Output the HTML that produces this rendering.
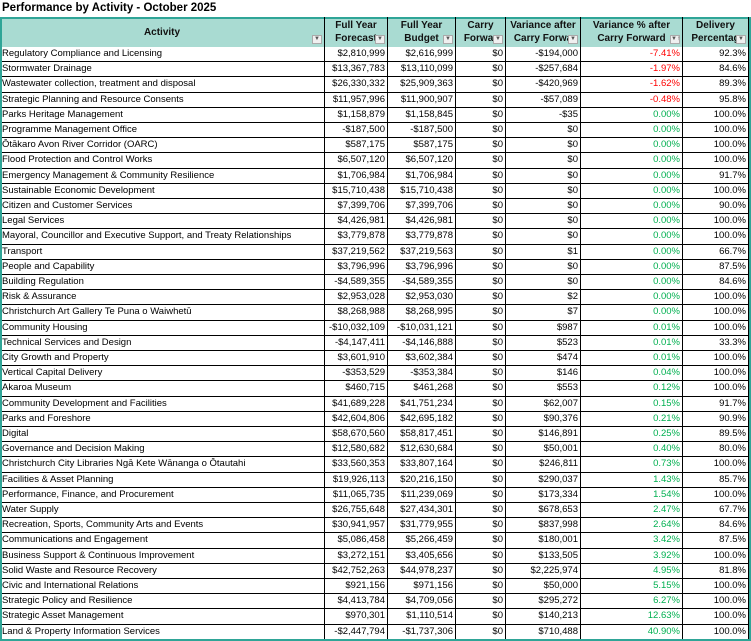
<!DOCTYPE html>
<html><head><meta charset="utf-8"><style>
*{margin:0;padding:0;box-sizing:border-box}
body{width:751px;height:641px;background:#fff;font-family:"Liberation Sans",Arial,sans-serif;font-size:9.5px;color:#000;position:relative;overflow:hidden}
.title{position:absolute;left:2px;top:2px;font-weight:bold;font-size:11.5px}
.hd{position:absolute;left:0;top:17px;width:750px;height:30px;background:#a9dbd2;border:2px solid #2fa597;border-bottom:none}
.hc{position:absolute;top:17px;height:30px;font-weight:bold;font-size:10px;text-align:center;line-height:13px;padding-top:2px;border-right:1px solid #000;color:#111}
.dd{position:absolute;bottom:3px;right:2px;width:10px;height:9px;background:#f0f0f0;border:1px solid #aaa;font-size:6px;line-height:7px;text-align:center;color:#555;font-weight:normal}
.r{position:absolute;left:0;width:750px;height:15.2px;border-bottom:1px solid #000}
.c{position:absolute;top:0;height:15.2px;line-height:14px;white-space:nowrap;overflow:hidden;border-right:1px solid #000;padding:0 2px}
.n{text-align:right}
.red{color:#ff0000}.grn{color:#00b050}
.frame{position:absolute;left:0;top:17px;width:751px;height:624px;border:2px solid #2fa597;border-top:none;pointer-events:none}
</style></head><body>
<div class="title">Performance by Activity - October 2025</div>
<div class="hd"></div>
<div id="h"></div>
<div id="rows"></div>
<div class="frame"></div>
<script>
var cols=[[0,325],[325,388],[388,456],[456,506],[506,581],[581,683],[683,749]];
var hdr=["<div style='padding-top:7px'>Activity</div>","Full Year<br>Forecast","Full Year<br>Budget","Carry<br>Forwar","Variance after<br>Carry Forwa","Variance % after<br>Carry Forward","Delivery<br>Percentag"];
var h='';
cols.forEach(function(c,i){h+='<div class="hc" style="left:'+c[0]+'px;width:'+(c[1]-c[0])+'px">'+hdr[i]+'<div class="dd">'+(i==5?'&#9660;&#8593;':'&#9660;')+'</div></div>';});
document.getElementById('h').innerHTML=h;
var d=[
["Regulatory Compliance and Licensing","$2,810,999","$2,616,999","$0","-$194,000","-7.41%","92.3%"],
["Stormwater Drainage","$13,367,783","$13,110,099","$0","-$257,684","-1.97%","84.6%"],
["Wastewater collection, treatment and disposal","$26,330,332","$25,909,363","$0","-$420,969","-1.62%","89.3%"],
["Strategic Planning and Resource Consents","$11,957,996","$11,900,907","$0","-$57,089","-0.48%","95.8%"],
["Parks Heritage Management","$1,158,879","$1,158,845","$0","-$35","0.00%","100.0%"],
["Programme Management Office","-$187,500","-$187,500","$0","$0","0.00%","100.0%"],
["Ōtākaro Avon River Corridor (OARC)","$587,175","$587,175","$0","$0","0.00%","100.0%"],
["Flood Protection and Control Works","$6,507,120","$6,507,120","$0","$0","0.00%","100.0%"],
["Emergency Management & Community Resilience","$1,706,984","$1,706,984","$0","$0","0.00%","91.7%"],
["Sustainable Economic Development","$15,710,438","$15,710,438","$0","$0","0.00%","100.0%"],
["Citizen and Customer Services","$7,399,706","$7,399,706","$0","$0","0.00%","90.0%"],
["Legal Services","$4,426,981","$4,426,981","$0","$0","0.00%","100.0%"],
["Mayoral, Councillor and Executive Support, and Treaty Relationships","$3,779,878","$3,779,878","$0","$0","0.00%","100.0%"],
["Transport","$37,219,562","$37,219,563","$0","$1","0.00%","66.7%"],
["People and Capability","$3,796,996","$3,796,996","$0","$0","0.00%","87.5%"],
["Building Regulation","-$4,589,355","-$4,589,355","$0","$0","0.00%","84.6%"],
["Risk & Assurance","$2,953,028","$2,953,030","$0","$2","0.00%","100.0%"],
["Christchurch Art Gallery Te Puna o Waiwhetū","$8,268,988","$8,268,995","$0","$7","0.00%","100.0%"],
["Community Housing","-$10,032,109","-$10,031,121","$0","$987","0.01%","100.0%"],
["Technical Services and Design","-$4,147,411","-$4,146,888","$0","$523","0.01%","33.3%"],
["City Growth and Property","$3,601,910","$3,602,384","$0","$474","0.01%","100.0%"],
["Vertical Capital Delivery","-$353,529","-$353,384","$0","$146","0.04%","100.0%"],
["Akaroa Museum","$460,715","$461,268","$0","$553","0.12%","100.0%"],
["Community Development and Facilities","$41,689,228","$41,751,234","$0","$62,007","0.15%","91.7%"],
["Parks and Foreshore","$42,604,806","$42,695,182","$0","$90,376","0.21%","90.9%"],
["Digital","$58,670,560","$58,817,451","$0","$146,891","0.25%","89.5%"],
["Governance and Decision Making","$12,580,682","$12,630,684","$0","$50,001","0.40%","80.0%"],
["Christchurch City Libraries Ngā Kete Wānanga o Ōtautahi","$33,560,353","$33,807,164","$0","$246,811","0.73%","100.0%"],
["Facilities & Asset Planning","$19,926,113","$20,216,150","$0","$290,037","1.43%","85.7%"],
["Performance, Finance, and Procurement","$11,065,735","$11,239,069","$0","$173,334","1.54%","100.0%"],
["Water Supply","$26,755,648","$27,434,301","$0","$678,653","2.47%","67.7%"],
["Recreation, Sports, Community Arts and Events","$30,941,957","$31,779,955","$0","$837,998","2.64%","84.6%"],
["Communications and Engagement","$5,086,458","$5,266,459","$0","$180,001","3.42%","87.5%"],
["Business Support & Continuous Improvement","$3,272,151","$3,405,656","$0","$133,505","3.92%","100.0%"],
["Solid Waste and Resource Recovery","$42,752,263","$44,978,237","$0","$2,225,974","4.95%","81.8%"],
["Civic and International Relations","$921,156","$971,156","$0","$50,000","5.15%","100.0%"],
["Strategic Policy and Resilience","$4,413,784","$4,709,056","$0","$295,272","6.27%","100.0%"],
["Strategic Asset Management","$970,301","$1,110,514","$0","$140,213","12.63%","100.0%"],
["Land & Property Information Services","-$2,447,794","-$1,737,306","$0","$710,488","40.90%","100.0%"]];
var s='';
d.forEach(function(r,i){
 var top=47+i*15.2;
 s+='<div class="r" style="top:'+top+'px">';
 r.forEach(function(v,j){
  var c=cols[j],cl='c'+(j?' n':'');
  if(j==5)cl+=v.charAt(0)=='-'?' red':' grn';
  s+='<div class="'+cl+'" style="left:'+c[0]+'px;width:'+(c[1]-c[0])+'px">'+v+'</div>';
 });
 s+='</div>';
});
document.getElementById('rows').innerHTML=s;
</script>
</body></html>
